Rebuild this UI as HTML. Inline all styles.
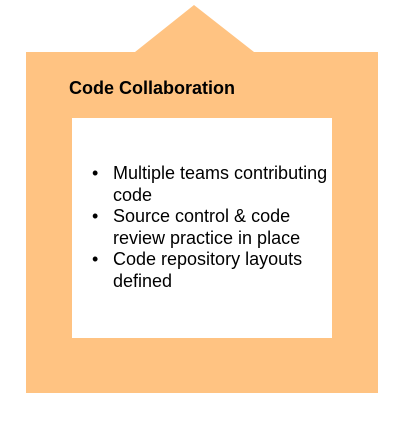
<!DOCTYPE html>
<html><head><meta charset="utf-8"><style>
html,body{margin:0;padding:0;width:412px;height:430px;background:#fff;overflow:hidden;font-family:"Liberation Sans",sans-serif;}
.t{position:absolute;white-space:nowrap;color:#000;}
</style></head><body>
<svg width="412" height="430" style="position:absolute;left:0;top:0">
<polygon points="26,52 135,52 194,5 254,52 378,52 378,393 26,393" fill="#FFC382"/>
<rect x="72" y="118" width="260" height="220" fill="#fff"/>
</svg>
<div class="t" style="left:69px;top:78px;font-size:18px;font-weight:bold;">Code Collaboration</div>
<div class="t" style="left:92px;top:163px;font-size:18px;line-height:21.6px;">
<div>•<span style="position:absolute;left:21px">Multiple teams contributing</span></div>
<div><span style="position:absolute;left:21px">code</span>&nbsp;</div>
<div>•<span style="position:absolute;left:21px">Source control &amp; code</span></div>
<div><span style="position:absolute;left:21px">review practice in place</span>&nbsp;</div>
<div>•<span style="position:absolute;left:21px">Code repository layouts</span></div>
<div><span style="position:absolute;left:21px">defined</span>&nbsp;</div>
</div>
</body></html>
